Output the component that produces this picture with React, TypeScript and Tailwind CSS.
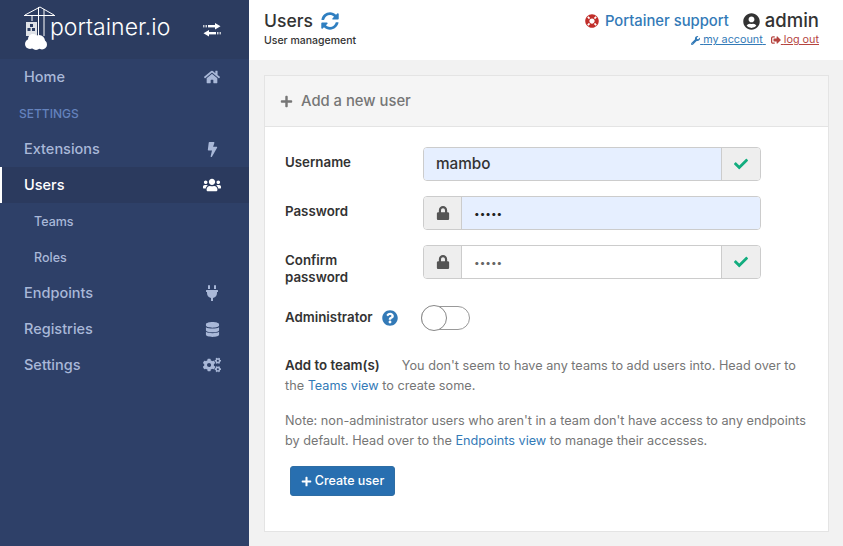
import {
  FaBolt,
  FaCheck,
  FaCogs,
  FaDatabase,
  FaHome,
  FaLifeRing,
  FaLock,
  FaPlug,
  FaPlus,
  FaQuestionCircle,
  FaSignOutAlt,
  FaSyncAlt,
  FaUserCircle,
  FaUsers,
  FaWrench,
} from "react-icons/fa";

function Logo() {
  return (
    <svg width="32" height="45" viewBox="0 0 32 45" className="shrink-0 mt-[-3px]">
      <g stroke="#fff" fill="none" strokeWidth="1">
        <path d="M0 9.5 H31 M1 9 L16 1 L30 9" />
        <path d="M14.5 1 V30 M20 3 V30" />
        <path d="M8 10 V15" />
      </g>
      <path d="M2 16 H13 V30 H2 Z" fill="#fff" fillOpacity="0.85" />
      <g fill="#fff">
        <circle cx="9" cy="33" r="5" />
        <circle cx="15" cy="35" r="6" />
        <circle cx="6" cy="38" r="5" />
        <circle cx="12" cy="39" r="5" />
        <circle cx="18" cy="38.5" r="5" />
      </g>
      <g fill="#2d3e63">
        <rect x="6" y="18" width="3" height="3" />
        <rect x="3.5" y="22" width="3" height="3" />
        <rect x="8" y="22" width="3" height="3" />
      </g>
    </svg>
  );
}

function SwitchIcon() {
  return (
    <svg width="18" height="14" viewBox="0 0 18 14" className="ml-auto text-white">
      <g fill="#fff">
        <rect x="0" y="2" width="1.5" height="2.4" fillOpacity="0.7" />
        <rect x="2.5" y="2" width="1.5" height="2.4" fillOpacity="0.8" />
        <rect x="5" y="2" width="8" height="2.4" />
        <path d="M12 0 L17.5 3.2 L12 6.4 Z" />
        <rect x="16.5" y="9" width="1.5" height="2.4" fillOpacity="0.7" />
        <rect x="14" y="9" width="1.5" height="2.4" fillOpacity="0.8" />
        <rect x="5" y="9" width="8" height="2.4" />
        <path d="M6 7 L0.5 10.2 L6 13.4 Z" />
      </g>
    </svg>
  );
}

function NavItem({ label, icon, active }: { label: string; icon: React.ReactNode; active?: boolean }) {
  return (
    <div
      className={`h-9 flex items-center justify-between pr-[29px] text-[14.5px] font-medium ${
        active ? "bg-[#2b3a5e] text-white border-l-2 border-white pl-[22px]" : "text-[#a9b8d8] pl-6"
      }`}
    >
      <span>{label}</span>
      <span className="w-4 flex justify-center">{icon}</span>
    </div>
  );
}

function SubItem({ label }: { label: string }) {
  return <div className="h-9 flex items-center pt-[2px] pl-[34px] text-[12.5px] font-medium text-[#a9b8d8]">{label}</div>;
}

function Sidebar() {
  return (
    <aside className="w-[249px] shrink-0 bg-[#2e4068] flex flex-col">
      <div className="h-[59px] bg-[#2c3c60] flex items-center pl-6 pr-[28px]">
        <Logo />
        <span className="-ml-[6px] mt-[-5px] text-[23px] font-light text-white">portainer.io</span>
        <SwitchIcon />
      </div>
      <NavItem label="Home" icon={<FaHome className="text-[16px]" />} />
      <div className="h-9 flex items-center pt-[2px] pl-[19px] text-[12px] font-medium text-[#6482bd]">SETTINGS</div>
      <NavItem label="Extensions" icon={<FaBolt className="text-[15px]" />} />
      <NavItem label="Users" icon={<FaUsers className="text-[18px] shrink-0" />} active />
      <SubItem label="Teams" />
      <SubItem label="Roles" />
      <NavItem label="Endpoints" icon={<FaPlug className="text-[16px]" />} />
      <NavItem label="Registries" icon={<FaDatabase className="text-[15px]" />} />
      <NavItem label="Settings" icon={<FaCogs className="text-[18px] shrink-0" />} />
    </aside>
  );
}

function Header() {
  return (
    <header className="h-[60px] bg-white flex justify-between pl-[15px] pr-6 shrink-0">
      <div className="pt-[9px]">
        <div className="flex items-center gap-2 text-[17.5px] leading-6 font-medium text-[#333]">
          Users <FaSyncAlt className="text-[#2f7fc1] text-[18px]" />
        </div>
        <div className="text-[10.5px] leading-4 font-medium text-[#333]">User management</div>
      </div>
      <div className="pt-[10px] flex flex-col items-end">
        <div className="flex items-center h-[22px]">
          <FaLifeRing className="text-[#c12e2a] text-[14px]" />
          <span className="ml-[6px] text-[14.8px] font-medium text-[#337ab7]">Portainer support</span>
          <FaUserCircle className="ml-[14px] text-[#333] text-[17px]" />
          <span className="ml-[5px] text-[18.5px] font-medium text-[#333]">admin</span>
        </div>
        <div className="flex items-center text-[10.8px] leading-4">
          <FaWrench className="text-[#337ab7] text-[9px]" />
          <span className="text-[#337ab7] underline">{"\u00a0"}my account{"\u00a0"}</span>
          <FaSignOutAlt className="ml-[5px] text-[#b5443f] text-[10px]" />
          <span className="text-[#b5443f] underline">{"\u00a0"}log out</span>
        </div>
      </div>
    </header>
  );
}

function Addon({ children, side }: { children: React.ReactNode; side: "left" | "right" }) {
  return (
    <div
      className={`shrink-0 bg-[#eee] flex items-center justify-center ${
        side === "left" ? "w-[38px] border-r border-[#ccc]" : "w-[39px] border-l border-[#ccc]"
      }`}
    >
      {children}
    </div>
  );
}

function InputGroup({
  label,
  value,
  filled,
  lock,
  check,
}: {
  label: React.ReactNode;
  value: string;
  filled?: boolean;
  lock?: boolean;
  check?: boolean;
}) {
  return (
    <div className="flex mb-[15px] items-start">
      <div className="w-[138px] pt-[7px] text-[13.3px] leading-[17px] font-semibold text-[#333]">{label}</div>
      <div className="w-[338px] h-[34px] flex border border-[#ccc] rounded-[4px] overflow-hidden">
        {lock && (
          <Addon side="left">
            <FaLock className="text-[#555] text-[14px]" />
          </Addon>
        )}
        <div className={`flex-1 flex items-center px-3 text-[#333] ${filled ? "bg-[#e6efff]" : "bg-white"}`}>
          <span className={value === "mambo" ? "text-[15.3px] font-medium" : `text-[10px] ${filled ? "text-[#222]" : "text-[#666]"}`}>
            {value}
          </span>
        </div>
        {check && (
          <Addon side="right">
            <FaCheck className="text-[#13ad7f] text-[14px]" />
          </Addon>
        )}
      </div>
    </div>
  );
}

export default function App() {
  return (
    <div className="w-[843px] h-[546px] flex overflow-hidden bg-[#f2f2f2] font-['Inter','Liberation_Sans',sans-serif]">
      <Sidebar />
      <main className="flex-1 flex flex-col min-w-0">
        <Header />
        <section className="ml-[15px] mr-[14px] mt-[15px] h-[457px] border border-[#e4e4e4] bg-white flex flex-col">
          <div className="h-[51px] shrink-0 bg-[#f5f5f5] border-b border-[#e4e4e4] flex items-center pl-[15px] text-[#767676]">
            <FaPlus className="text-[13px]" />
            <span className="ml-[8px] text-[14.8px] font-medium">Add a new user</span>
          </div>
          <div className="pl-5 pt-5 flex flex-col">
            <InputGroup label="Username" value="mambo" filled check />
            <InputGroup label="Password" value="•••••" filled lock />
            <InputGroup label={<>Confirm<br />password</>} value="•••••" lock check />
            <div className="flex items-center mt-[4px] h-[26px]">
              <div className="w-[136px] flex items-center text-[13.3px] font-semibold text-[#333]">
                Administrator
                <FaQuestionCircle className="ml-[9px] text-[#337ab7] text-[16px]" />
              </div>
              <div className="relative w-[49px] h-[24px] rounded-full border border-[#999] bg-white">
                <div className="absolute left-[-1px] top-[-2px] w-[26px] h-[26px] rounded-full border border-[#888] bg-white" />
              </div>
            </div>
            <p className="mt-[24px] w-[530px] text-[12.7px] leading-5 text-[#767676]">
              <span className="font-semibold text-[13.3px] text-[#333] mr-[22px]">Add to team(s)</span>
              You don't seem to have any teams to add users into. Head over to the{" "}
              <span className="text-[#337ab7]">Teams view</span> to create some.
            </p>
            <p className="mt-[15px] w-[530px] text-[12.7px] leading-5 text-[#767676]">
              Note: non-administrator users who aren't in a team don't have access to any endpoints by default. Head over to the{" "}
              <span className="text-[#337ab7]">Endpoints view</span> to manage their accesses.
            </p>
            <button className="mt-[15px] ml-[5px] w-[105px] h-[30px] rounded-[3px] bg-[#286fb0] border border-[#2e6da4] text-white text-[12.5px] font-medium flex items-center justify-center">
              <FaPlus className="text-[11px] mr-[3px]" />
              Create user
            </button>
          </div>
        </section>
      </main>
    </div>
  );
}
